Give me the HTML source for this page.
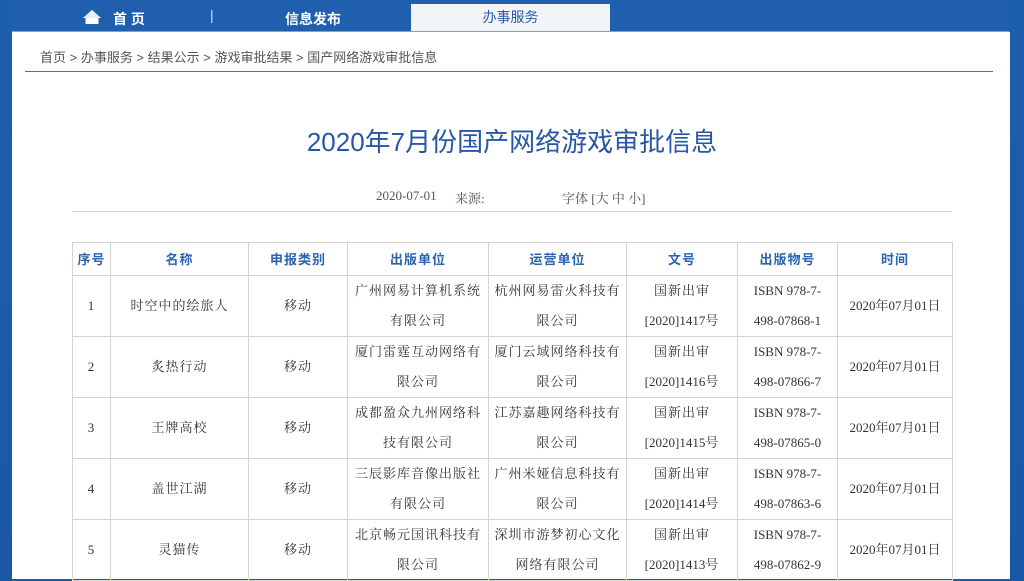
<!DOCTYPE html>
<html><head><meta charset="utf-8"><style>
*{margin:0;padding:0;box-sizing:border-box}
body{width:1024px;height:579px;overflow:hidden;background:#1b5aa6;font-family:"Liberation Serif","Noto Serif CJK SC",serif;position:relative}
.bg{position:absolute;inset:0;background:linear-gradient(180deg,#1d5fab,#1a58a5)}
.nav{position:absolute;left:12px;top:2px;width:997px;height:30px;background:#1f5fae;border-radius:4px 4px 0 0;border-bottom:1px solid #7aa3d6}
.nav span{position:absolute;top:7px;color:#fff;font:bold 14px "Liberation Sans","Noto Sans CJK SC",sans-serif}
.tab{position:absolute;left:411px;top:4px;width:199px;height:27px;background:#f3f4f6;color:#2a5ba8;font:14px "Liberation Sans","Noto Sans CJK SC",sans-serif;text-align:center;line-height:27px}
.main{position:absolute;left:12px;top:32px;width:998px;height:547px;background:#fff}
.crumb{position:absolute;left:40px;top:47px;font:13px "Liberation Sans","Noto Sans CJK SC",sans-serif;color:#555}
.l1{position:absolute;left:25px;top:71px;width:968px;height:1px;background:#3f74c4}
h1{position:absolute;left:0;width:1024px;top:122px;text-align:center;font:400 26px "Liberation Sans","Noto Sans CJK SC",sans-serif;color:#2757a5}
.meta{position:absolute;top:188px;font-size:13px;color:#555}
.l2{position:absolute;left:72px;top:211px;width:880px;height:1px;background:#d6d6d6}
table{position:absolute;left:72px;top:242px;border-collapse:collapse;table-layout:fixed;width:880px}
td,th{border:1px solid #d4d4d4;text-align:center;font-size:13px;color:#333;line-height:30px;letter-spacing:1px;font-weight:normal;padding:0 5px}
th{height:33px;line-height:31px;padding:0;white-space:nowrap;color:#2a63b0;font:bold 13px/31px "Liberation Sans","Noto Sans CJK SC",sans-serif;letter-spacing:1px}
td{height:60.6px}
i{font-style:normal;letter-spacing:0}
</style></head><body>
<div class="bg"></div>
<div class="nav">
<svg style="position:absolute;left:70px;top:7px" width="20" height="16" viewBox="0 0 20 16"><path d="M10 1L1 9h2.5v6h13V9H19z" fill="#fff"/><path d="M10 1L1 9h18z" fill="#e8eef8"/></svg>
<span style="left:101px">首 页</span>
<span style="left:198px;top:5px;font-weight:normal;color:#cfe0f5">|</span>
<span style="left:273px">信息发布</span>
</div>
<div class="tab">办事服务</div>
<div class="main"></div>
<div class="crumb">首页 &gt; 办事服务 &gt; 结果公示 &gt; 游戏审批结果 &gt; 国产网络游戏审批信息</div>
<div class="l1"></div>
<h1>2020年7月份国产网络游戏审批信息</h1>
<div class="meta" style="left:376px">2020-07-01</div>
<div class="meta" style="left:455px">来源:</div>
<div class="meta" style="left:562px">字体 [大 中 小]</div>
<div class="l2"></div>
<table>
<colgroup><col style="width:38px"><col style="width:138px"><col style="width:99px"><col style="width:141px"><col style="width:138px"><col style="width:111px"><col style="width:100px"><col style="width:115px"></colgroup>
<tr><th>序号</th><th>名称</th><th>申报类别</th><th>出版单位</th><th>运营单位</th><th>文号</th><th>出版物号</th><th>时间</th></tr>
<tr><td>1</td><td>时空中的绘旅人</td><td>移动</td><td>广州网易计算机系统有限公司</td><td>杭州网易雷火科技有限公司</td><td>国新出审<br><i>[2020]1417</i>号</td><td><i>ISBN 978-7-<br>498-07868-1</i></td><td><i>2020年07月01日</i></td></tr>
<tr><td>2</td><td>炙热行动</td><td>移动</td><td>厦门雷霆互动网络有限公司</td><td>厦门云域网络科技有限公司</td><td>国新出审<br><i>[2020]1416</i>号</td><td><i>ISBN 978-7-<br>498-07866-7</i></td><td><i>2020年07月01日</i></td></tr>
<tr><td>3</td><td>王牌高校</td><td>移动</td><td>成都盈众九州网络科技有限公司</td><td>江苏嘉趣网络科技有限公司</td><td>国新出审<br><i>[2020]1415</i>号</td><td><i>ISBN 978-7-<br>498-07865-0</i></td><td><i>2020年07月01日</i></td></tr>
<tr><td>4</td><td>盖世江湖</td><td>移动</td><td>三辰影库音像出版社有限公司</td><td>广州米娅信息科技有限公司</td><td>国新出审<br><i>[2020]1414</i>号</td><td><i>ISBN 978-7-<br>498-07863-6</i></td><td><i>2020年07月01日</i></td></tr>
<tr><td>5</td><td>灵猫传</td><td>移动</td><td>北京畅元国讯科技有限公司</td><td>深圳市游梦初心文化网络有限公司</td><td>国新出审<br><i>[2020]1413</i>号</td><td><i>ISBN 978-7-<br>498-07862-9</i></td><td><i>2020年07月01日</i></td></tr>
</table>
</body></html>
